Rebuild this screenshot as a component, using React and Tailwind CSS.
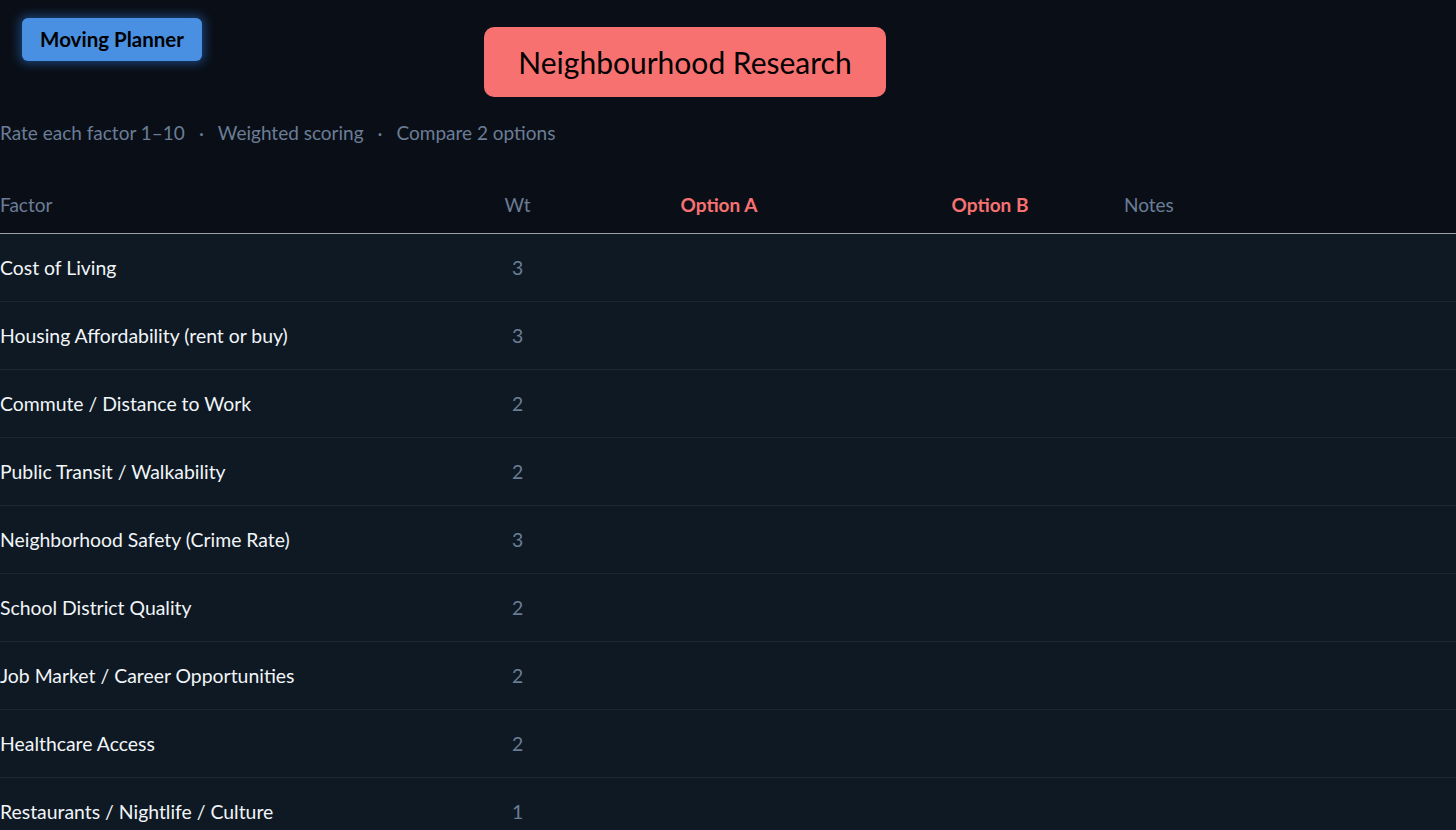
import React from "react";

const rows = [
  ["Cost of Living", 3],
  ["Housing Affordability (rent or buy)", 3],
  ["Commute / Distance to Work", 2],
  ["Public Transit / Walkability", 2],
  ["Neighborhood Safety (Crime Rate)", 3],
  ["School District Quality", 2],
  ["Job Market / Career Opportunities", 2],
  ["Healthcare Access", 2],
  ["Restaurants / Nightlife / Culture", 1],
];

export default function App() {
  return (
    <div className="min-h-screen bg-[#0a0f17] font-['Lato','Open_Sans',sans-serif] text-white">
      <div className="flex items-start">
        <div className="ml-[22px] mt-[18px] flex h-[43px] w-[180px] items-center justify-center rounded-[6px] bg-[#4a90e2] text-[20.5px] font-bold text-black shadow-[0_0_10px_3px_rgba(40,110,200,0.5)]">
          Moving Planner
        </div>
        <div className="ml-[282px] mt-[27px] flex h-[70px] w-[402px] items-center justify-center rounded-[10px] bg-[#f87171] text-[30px] text-black">
          Neighbourhood Research
        </div>
      </div>
      <div className="mt-[24px] flex h-[24px] items-center text-[19px] text-[#6b7d96]">
        <span>Rate each factor 1–10</span>
        <span className="mx-[14px]">·</span>
        <span>Weighted scoring</span>
        <span className="mx-[14px]">·</span>
        <span>Compare 2 options</span>
      </div>
      <div className="mt-[36px] flex h-[53px] items-center border-b border-[#9aa0a8] pb-[4px] text-[19px] text-[#6b7d96]">
        <div className="w-[480px]">Factor</div>
        <div className="w-[75px] text-center">Wt</div>
        <div className="w-[328px] text-center font-bold text-[#f87171]">Option A</div>
        <div className="w-[214px] text-center font-bold text-[#f87171]">Option B</div>
        <div className="pl-[27px]">Notes</div>
      </div>
      {rows.map(([name, wt]) => (
        <div
          key={name}
          className="flex h-[68px] items-center border-b border-[#1c2836] bg-[#0f1923] text-[19.4px]"
        >
          <div className="w-[480px] text-[#f1f5f9]">{name}</div>
          <div className="w-[75px] text-center text-[#6b7d96]">{wt}</div>
          <div className="w-[328px]"></div>
          <div className="w-[214px]"></div>
          <div className="flex-1"></div>
        </div>
      ))}
    </div>
  );
}
